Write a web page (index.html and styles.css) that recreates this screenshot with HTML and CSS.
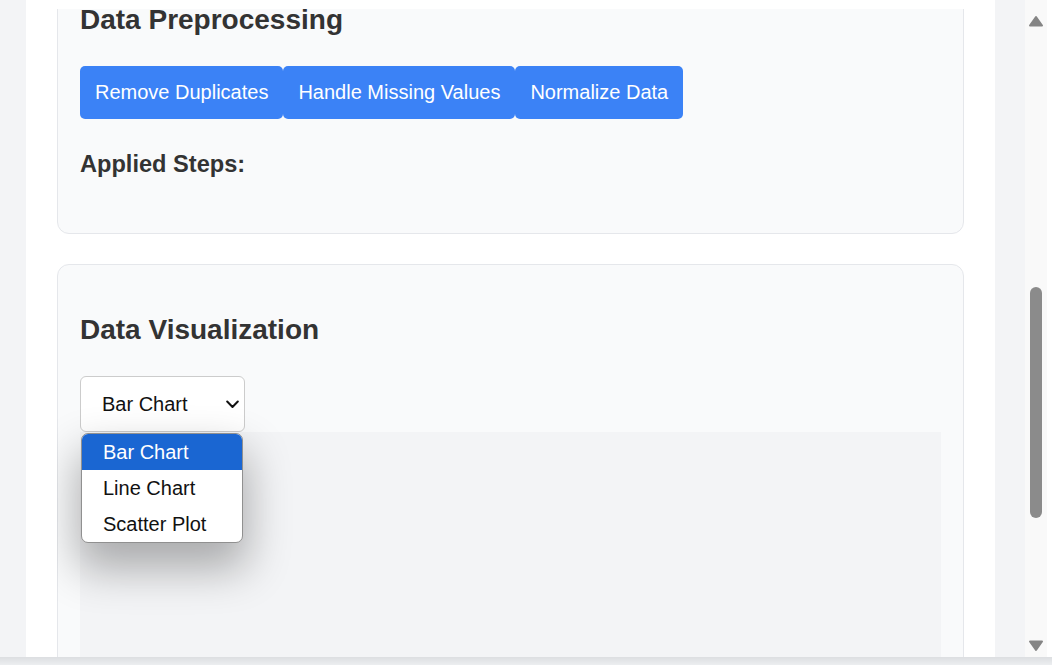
FILE: index.html
```html
<!DOCTYPE html>
<html lang="en">
<head>
    <meta charset="UTF-8">
    <meta name="viewport" content="width=device-width, initial-scale=1.0">
    <title>Data Explorer</title>
    <link rel="stylesheet" href="styles.css">
</head>
<body>

    <div class="window">
        <!-- Page area -->
        <main class="viewport">
            <div class="container">
                <div class="scroller">
                    <div class="content">

                        <section class="card">
                            <h2>Data Preprocessing</h2>
                            <div class="actions">
                                <button class="btn">Remove Duplicates</button>
                                <button class="btn">Handle Missing Values</button>
                                <button class="btn">Normalize Data</button>
                            </div>
                            <h3>Applied Steps:</h3>
                            <ul class="steps"></ul>
                        </section>

                        <section class="card">
                            <h2>Data Visualization</h2>
                            <div class="chart-picker">
                                <div class="select">
                                    <span>Bar Chart</span>
                                    <svg class="chevron" width="13" height="9" viewBox="0 0 13 9">
                                        <path d="M1.2 1.5 L6.5 7 L11.8 1.5" fill="none" stroke="#111" stroke-width="2" stroke-linecap="round" stroke-linejoin="round"/>
                                    </svg>
                                </div>
                                <ul class="select-menu">
                                    <li class="option option-active">Bar Chart</li>
                                    <li class="option">Line Chart</li>
                                    <li class="option">Scatter Plot</li>
                                </ul>
                            </div>
                            <div class="chart"></div>
                        </section>

                    </div>
                </div>
            </div>
        </main>

        <!-- Scrollbar -->
        <div class="scrollbar">
            <svg class="arrow" width="16" height="12" viewBox="0 0 16 12">
                <polygon points="8,2 14,10.5 2,10.5" fill="#858585" stroke="#858585" stroke-width="2" stroke-linejoin="round"/>
            </svg>
            <div class="track">
                <div class="thumb"></div>
            </div>
            <svg class="arrow" width="16" height="12" viewBox="0 0 16 12">
                <polygon points="2,1.5 14,1.5 8,10" fill="#858585" stroke="#858585" stroke-width="2" stroke-linejoin="round"/>
            </svg>
        </div>
    </div>

</body>
</html>
```

FILE: styles.css
```css
body {
    font-family: "Liberation Sans", Arial, sans-serif;
    margin: 0;
    height: 665px;
    overflow: hidden;
    background: linear-gradient(to bottom, #ffffff 657px, #dcdee1 657px, #eceef0 665px);
    color: #333;
}
.window {
    display: flex;
    width: 1047px;
    height: 657px;
    overflow: hidden;
}
.viewport {
    flex: 1;
    background-color: #f3f4f6;
    overflow: hidden;
}
.container {
    width: 969px;
    height: 100%;
    margin-left: 26px;
    padding: 9px 31px 0;
    box-sizing: border-box;
    background: white;
}
.scroller {
    height: 648px;
    overflow: hidden;
}
.content {
    margin-top: -55px;
}
.card {
    background-color: #f9fafb;
    border: 1px solid #e5e7eb;
    border-radius: 12px;
    padding: 22px;
}
.card + .card {
    margin-top: 30px;
}
.card h2 {
    font-size: 28px;
    margin: 27px 0 30px;
    color: #333;
}
.card h3 {
    font-size: 23.6px;
    margin: 32px 0 33px;
    color: #333;
}
.actions {
    display: flex;
}
.btn {
    font-family: inherit;
    font-size: 20px;
    padding: 15px;
    background-color: #3b82f6;
    color: white;
    border: none;
    border-radius: 5px;
    cursor: pointer;
}
.steps {
    margin: 0;
    padding: 0;
}
.chart-picker {
    position: relative;
    width: 165px;
}
.select {
    display: flex;
    align-items: center;
    justify-content: space-between;
    height: 56px;
    box-sizing: border-box;
    padding: 0 5px 0 21px;
    background: white;
    border: 1px solid #cccccc;
    border-radius: 6px;
    font-size: 20px;
    color: #111;
}
.chevron {
    display: block;
}
.select-menu {
    position: absolute;
    top: 57px;
    left: 1px;
    width: 162px;
    box-sizing: border-box;
    margin: 0;
    padding: 0;
    list-style: none;
    background: white;
    border: 1px solid #909090;
    border-radius: 7px;
    overflow: hidden;
    box-shadow: 0 22px 44px 4px rgba(0, 0, 0, 0.3);
    z-index: 5;
}
.option {
    height: 36px;
    line-height: 36px;
    padding-left: 21px;
    font-size: 20px;
    color: #111;
}
.option-active {
    background-color: #1a66d2;
    color: white;
}
.chart {
    height: 400px;
    background-color: #f3f4f6;
}
.scrollbar {
    width: 22px;
    display: flex;
    flex-direction: column;
    align-items: center;
    padding: 15px 0 5px;
    box-sizing: border-box;
    background-color: #f9f9f9;
}
.arrow {
    display: block;
    flex-shrink: 0;
}
.track {
    flex: 1;
    width: 100%;
    display: flex;
    justify-content: center;
}
.thumb {
    width: 12px;
    height: 231px;
    margin-top: 260px;
    border-radius: 6px;
    background-color: #8b8b8b;
}
```
